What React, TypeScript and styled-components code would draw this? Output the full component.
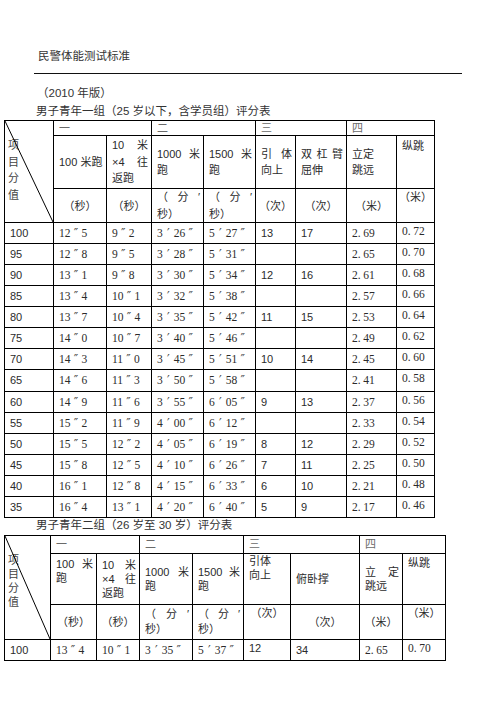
import React from "react";
import styled, { createGlobalStyle } from "styled-components";

const Global = createGlobalStyle`
  html, body { margin: 0; padding: 0; background: #fff; }
  body {
    font-family: "Liberation Sans", "Noto Sans CJK SC", sans-serif;
    color: #2b2b2b;
  }
`;

const SANS = `"Liberation Sans", "Noto Sans CJK SC", sans-serif`;
const SERIF = `"Liberation Serif", "Noto Sans CJK SC", serif`;

const Page = styled.div`
  width: 496px;
  min-height: 702px;
  padding-top: 49px;
  box-sizing: border-box;
`;

const Header = styled.div`
  margin-left: 34px;
  width: 428px;
  box-sizing: border-box;
  padding: 0 0 10px 4px;
  border-bottom: 1px solid #111;
  font-size: 11.5px;
  line-height: 14px;
  color: #333;
`;

const Note = styled.div<{ $indent: number; $top: number; $lh: number }>`
  margin: ${(p) => p.$top}px 0 0 ${(p) => p.$indent}px;
  font-size: 11.5px;
  line-height: ${(p) => p.$lh}px;
  color: #333;
  white-space: nowrap;
`;

const Table = styled.table<{ $w: number }>`
  border-collapse: collapse;
  table-layout: fixed;
  width: ${(p) => p.$w}px;
  margin-left: 4px;
  font-size: 11px;
  font-family: ${SANS};
`;

const Td = styled.td<{
  $h?: number;
  $v?: "top" | "middle";
  $center?: boolean;
  $pt?: number;
  $pb?: number;
  $pl?: number;
  $muted?: boolean;
  $serif?: boolean;
}>`
  border: 1px solid #000;
  height: ${(p) => (p.$h ? `${p.$h}px` : "auto")};
  vertical-align: ${(p) => p.$v ?? "middle"};
  text-align: ${(p) => (p.$center ? "center" : "left")};
  padding: ${(p) => p.$pt ?? 0}px ${(p) => (p.$center ? 0 : 3)}px ${(p) => p.$pb ?? 0}px
    ${(p) => (p.$center ? 0 : p.$pl ?? 5)}px;
  color: ${(p) => (p.$muted ? "#6a6a6a" : "#2b2b2b")};
  font-family: ${(p) => (p.$serif ? SERIF : SANS)};
  font-size: ${(p) => (p.$serif ? "11.5px" : "11px")};
  line-height: 14px;
  white-space: nowrap;
  overflow: visible;
  box-sizing: border-box;
  position: relative;
`;

const Diag = styled.svg`
  position: absolute;
  left: 0;
  top: 0;
  width: 100%;
  height: 100%;
  pointer-events: none;
  overflow: visible;
`;

const VLabel = styled.div<{ $lh: number; $pt: number }>`
  display: flex;
  flex-direction: column;
  padding-top: ${(p) => p.$pt}px;
  line-height: ${(p) => p.$lh}px;
  color: #444;
`;

const JLine = styled.div<{ $j?: boolean }>`
  white-space: nowrap;
  text-align: ${(p) => (p.$j ? "justify" : "left")};
  text-align-last: ${(p) => (p.$j ? "justify" : "auto")};
`;

const Mark = styled.span`
  display: inline-block;
  width: 11px;
  text-align: center;
  font-family: "DejaVu Sans", sans-serif;
  font-size: 12px;
  line-height: 12px;
  color: #444;
`;

const DotMark = styled.span`
  display: inline-block;
  width: 5.5px;
  text-align: left;
`;

const Time = ({ v }: { v: string }) => (
  <>
    {Array.from(v).map((c, i) =>
      c === "′" || c === "″" ? <Mark key={i}>{c}</Mark> : <React.Fragment key={i}>{c}</React.Fragment>
    )}
  </>
);

const Dec = ({ v }: { v: string }) => {
  const [a, b] = v.split(".");
  return (
    <>
      {a}
      <DotMark>.</DotMark>
      {b}
    </>
  );
};

const LineBox = styled.div<{ $lh: number }>`
  line-height: ${(p) => p.$lh}px;
`;

const Lines = ({ lines, lh }: { lines: string[]; lh: number }) => (
  <LineBox $lh={lh}>
    {lines.map((l, i) => (
      <JLine key={i} $j={i < lines.length - 1 && l.includes(" ")}>
        {l}
      </JLine>
    ))}
  </LineBox>
);

const Corner = ({ lh, pt }: { lh: number; pt: number }) => (
  <>
    <Diag viewBox="0 0 100 100" preserveAspectRatio="none">
      <line x1="0" y1="0" x2="100" y2="100" stroke="#000" strokeWidth="1" vectorEffect="non-scaling-stroke" />
    </Diag>
    <VLabel $lh={lh} $pt={pt}>
      {Array.from("项目分值").map((c) => (
        <span key={c}>{c}</span>
      ))}
    </VLabel>
  </>
);

const rows1 = [
  ["100", "12″5", "9″2", "3′26″", "5′27″", "13", "17", "2.69", "0.72"],
  ["95", "12″8", "9″5", "3′28″", "5′31″", "", "", "2.65", "0.70"],
  ["90", "13″1", "9″8", "3′30″", "5′34″", "12", "16", "2.61", "0.68"],
  ["85", "13″4", "10″1", "3′32″", "5′38″", "", "", "2.57", "0.66"],
  ["80", "13″7", "10″4", "3′35″", "5′42″", "11", "15", "2.53", "0.64"],
  ["75", "14″0", "10″7", "3′40″", "5′46″", "", "", "2.49", "0.62"],
  ["70", "14″3", "11″0", "3′45″", "5′51″", "10", "14", "2.45", "0.60"],
  ["65", "14″6", "11″3", "3′50″", "5′58″", "", "", "2.41", "0.58"],
  ["60", "14″9", "11″6", "3′55″", "6′05″", "9", "13", "2.37", "0.56"],
  ["55", "15″2", "11″9", "4′00″", "6′12″", "", "", "2.33", "0.54"],
  ["50", "15″5", "12″2", "4′05″", "6′19″", "8", "12", "2.29", "0.52"],
  ["45", "15″8", "12″5", "4′10″", "6′26″", "7", "11", "2.25", "0.50"],
  ["40", "16″1", "12″8", "4′15″", "6′33″", "6", "10", "2.21", "0.48"],
  ["35", "16″4", "13″1", "4′20″", "6′40″", "5", "9", "2.17", "0.46"],
];

const rows2 = [["100", "13″4", "10″1", "3′35″", "5′37″", "12", "34", "2.65", "0.70"]];

const DataRow = ({ r, h, lifted }: { r: string[]; h: number; lifted?: number[] }) => (
  <tr>
    {r.map((c, i) => {
      const serif = (i >= 1 && i <= 4) || i >= 7;
      const lift = i === 8 || (lifted ?? []).includes(i);
      return (
        <Td key={i} $h={h} $serif={serif} $pb={lift ? 4 : 0}>
          {i >= 1 && i <= 4 ? <Time v={c} /> : i >= 7 ? <Dec v={c} /> : c}
        </Td>
      );
    })}
  </tr>
);

const cols1 = [49, 53, 45, 52, 52, 40, 51, 50, 38];
const cols2 = [46, 46, 43, 53, 51, 47, 69, 43, 43];

const Cols = ({ w }: { w: number[] }) => (
  <colgroup>
    {w.map((x, i) => (
      <col key={i} style={{ width: x }} />
    ))}
  </colgroup>
);

const GroupRow = ({ h }: { h: number }) => (
  <>
    {["一", "二", "三", "四"].map((g) => (
      <Td key={g} colSpan={2} $h={h} $muted>
        {g}
      </Td>
    ))}
  </>
);

export default function App() {
  const lh1 = 16.5;
  const lh2 = 14;
  return (
    <Page>
      <Global />
      <Header>民警体能测试标准</Header>
      <Note $indent={37} $top={12} $lh={14}>
        （2010 年版）
      </Note>
      <Note $indent={36} $top={3} $lh={16}>
        男子青年一组（25 岁以下，含学员组）评分表
      </Note>
      <Table $w={430} style={{ marginTop: 1 }}>
        <Cols w={cols1} />
        <tbody>
          <tr>
            <Td rowSpan={3} $v="top" $pl={3}>
              <Corner lh={lh1} pt={16} />
            </Td>
            <GroupRow h={15} />
          </tr>
          <tr>
            <Td $h={53}>100 米跑</Td>
            <Td $h={53}>
              <Lines lines={["10 米", "×4 往", "返跑"]} lh={lh1} />
            </Td>
            <Td $h={53}>
              <Lines lines={["1000 米", "跑"]} lh={lh1} />
            </Td>
            <Td $h={53}>
              <Lines lines={["1500 米", "跑"]} lh={lh1} />
            </Td>
            <Td $h={53}>
              <Lines lines={["引 体", "向上"]} lh={lh1} />
            </Td>
            <Td $h={53}>
              <Lines lines={["双 杠 臂", "屈伸"]} lh={lh1} />
            </Td>
            <Td $h={53}>
              <Lines lines={["立定", "跳远"]} lh={lh1} />
            </Td>
            <Td $h={53} $v="top" $pt={3}>
              纵跳
            </Td>
          </tr>
          <tr>
            <Td $h={34} $center>（秒）</Td>
            <Td $h={34} $center>（秒）</Td>
            <Td $h={34}>
              <Lines lines={["（ 分 ′", "秒）"]} lh={lh1} />
            </Td>
            <Td $h={34}>
              <Lines lines={["（ 分 ′", "秒）"]} lh={lh1} />
            </Td>
            <Td $h={34} $center>（次）</Td>
            <Td $h={34} $center>（次）</Td>
            <Td $h={34} $center>（米）</Td>
            <Td $h={34} $center $v="top" $pt={1}>
              （米）
            </Td>
          </tr>
          {rows1.map((r) => (
            <DataRow key={r[0]} r={r} h={21.07} />
          ))}
        </tbody>
      </Table>
      <Note $indent={36} $top={0} $lh={15}>
        男子青年二组（26 岁至 30 岁）评分表
      </Note>
      <Table $w={441} style={{ marginTop: 2 }}>
        <Cols w={cols2} />
        <tbody>
          <tr>
            <Td rowSpan={3} $v="top" $pl={3}>
              <Corner lh={lh2} pt={17} />
            </Td>
            <GroupRow h={18} />
          </tr>
          <tr>
            <Td $h={51} $v="top" $pt={3}>
              <Lines lines={["100 米", "跑"]} lh={lh2} />
            </Td>
            <Td $h={51}>
              <Lines lines={["10 米", "×4 往", "返跑"]} lh={lh2} />
            </Td>
            <Td $h={51}>
              <Lines lines={["1000 米", "跑"]} lh={lh2} />
            </Td>
            <Td $h={51}>
              <Lines lines={["1500 米", "跑"]} lh={lh2} />
            </Td>
            <Td $h={51} $v="top" $pt={0}>
              <Lines lines={["引体", "向上"]} lh={lh2} />
            </Td>
            <Td $h={51}>俯卧撑</Td>
            <Td $h={51}>
              <Lines lines={["立 定", "跳远"]} lh={lh2} />
            </Td>
            <Td $h={51} $v="top" $pt={2}>
              纵跳
            </Td>
          </tr>
          <tr>
            <Td $h={35} $center>（秒）</Td>
            <Td $h={35} $center>（秒）</Td>
            <Td $h={35}>
              <Lines lines={["（ 分 ′", "秒）"]} lh={15} />
            </Td>
            <Td $h={35}>
              <Lines lines={["（ 分 ′", "秒）"]} lh={15} />
            </Td>
            <Td $h={35} $center $v="top" $pt={1}>
              （次）
            </Td>
            <Td $h={35} $center>（次）</Td>
            <Td $h={35} $center>（米）</Td>
            <Td $h={35} $center $v="top" $pt={1}>
              （米）
            </Td>
          </tr>
          {rows2.map((r) => (
            <DataRow key={r[0]} r={r} h={21} lifted={[5]} />
          ))}
        </tbody>
      </Table>
    </Page>
  );
}
